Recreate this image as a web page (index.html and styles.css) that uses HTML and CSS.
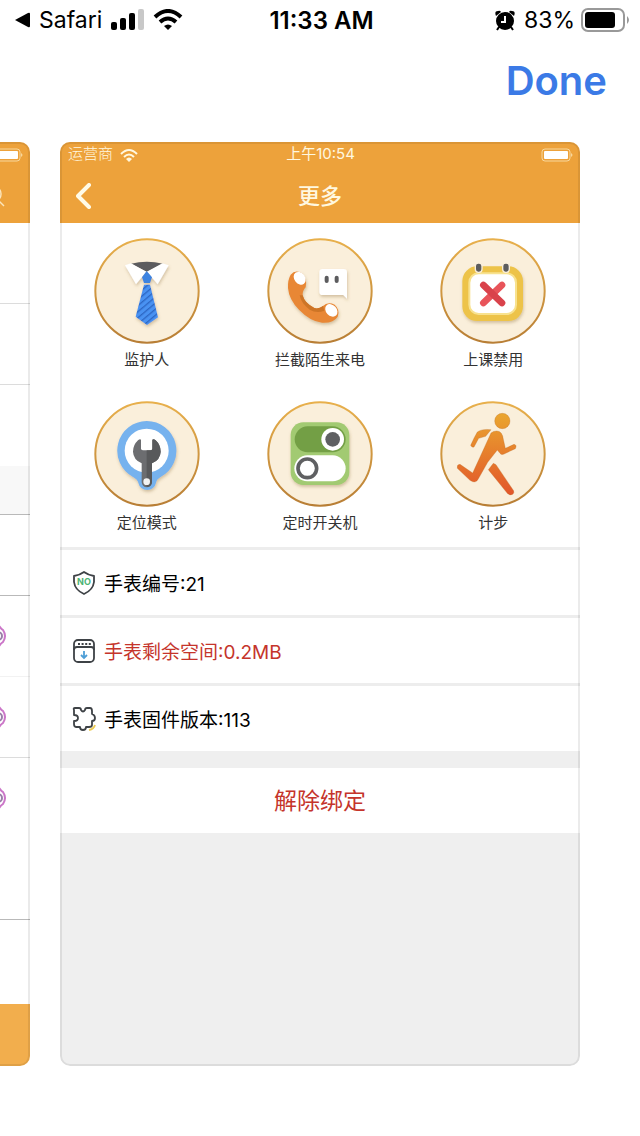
FILE: index.html
```html
<!DOCTYPE html>
<html lang="zh-CN">
<head>
    <meta charset="UTF-8">
    <meta name="viewport" content="width=device-width, initial-scale=1.0">
    <title>更多</title>
    <link rel="stylesheet" href="styles.css">
</head>
<body>

    <header class="status">
        <div class="status-left">
            <svg class="back-app" width="16" height="16" viewBox="0 0 16 16"><path d="M1 8 L14 1 Q16 0 16 2 V14 Q16 16 14 15Z"/></svg>
            <span class="app-name">Safari</span>
            <svg class="signal" width="34" height="22" viewBox="0 0 34 22">
                <rect x="0" y="13" width="6" height="8" rx="2"/>
                <rect x="9" y="9" width="6" height="12" rx="2"/>
                <rect x="18" y="4" width="6" height="17" rx="2"/>
                <rect x="27" y="0" width="6" height="21" rx="2" fill="#c8c8c8"/>
            </svg>
            <svg width="30" height="22" viewBox="0 0 30 22" fill="none" stroke="#000" stroke-width="4">
                <path d="M2 8 Q15 -4 28 8"/>
                <path d="M7 13 Q15 6 23 13"/>
                <path d="M11 17 Q15 14 19 17 L15 21Z" fill="#000" stroke="none"/>
            </svg>
        </div>
        <div class="status-time">11:33 AM</div>
        <div class="status-right">
            <svg width="20" height="21" viewBox="0 0 20 21">
                <circle cx="10" cy="11" r="9"/>
                <path d="M1 6 Q-1 1 3 1 Q5 0 6 2Z M19 6 Q21 1 17 1 Q15 0 14 2Z"/>
                <path d="M4 17 L2 20M16 17 L18 20" fill="none" stroke="#000" stroke-width="2"/>
                <path d="M10 6 V12 H6" fill="none" stroke="#fff" stroke-width="2"/>
            </svg>
            <span class="percent">83%</span>
            <svg width="48" height="24" viewBox="0 0 48 24">
                <rect x="1" y="1" width="42" height="22" rx="6" fill="none" stroke="#999" stroke-width="2"/>
                <rect x="4" y="4" width="30" height="16" rx="3"/>
                <path d="M46 8 Q50 12 46 16Z" fill="#999"/>
            </svg>
        </div>
    </header>

    <div class="toolbar">
        <button type="button" class="done">Done</button>
    </div>

    <main class="gallery">

        <!-- previous screenshot, only its right edge is visible -->
        <section class="shot prev">
            <div class="shot-header">
                <div class="shot-status">
                    <svg class="battery" width="32" height="14" viewBox="0 0 32 14">
                        <rect x="1" y="1" width="28" height="12" rx="3" fill="none" stroke="#f8d79c"/>
                        <rect x="3" y="3" width="24" height="8" rx="1" fill="#fff"/>
                        <path d="M30 5 Q33 7 30 9Z" fill="#f8d79c"/>
                    </svg>
                </div>
                <div class="shot-nav">
                    <svg class="search" width="22" height="22" viewBox="0 0 22 22" fill="none" stroke="#fbe6bd" stroke-width="1.500"><circle cx="10" cy="9" r="8"/><path d="M15 15 L21 21"/></svg>
                </div>
            </div>
            <div class="line"></div>
            <div class="line"></div>
            <div class="line plain"></div>
            <div class="band"></div>
            <div class="line dark"></div>
            <div class="line faint"><svg width="24" height="26" viewBox="0 0 24 26" fill="none"><path d="M12 1 Q14 5 17 7 Q21 13 17 19 Q14 21 12 25" stroke="#cb76c8" stroke-width="2"/><circle cx="12" cy="13" r="4" stroke="#9a7fa8" stroke-width="2"/></svg></div>
            <div class="line"><svg width="24" height="26" viewBox="0 0 24 26" fill="none"><path d="M12 1 Q14 5 17 7 Q21 13 17 19 Q14 21 12 25" stroke="#cb76c8" stroke-width="2"/><circle cx="12" cy="13" r="4" stroke="#9a7fa8" stroke-width="2"/></svg></div>
            <div class="line plain"><svg width="24" height="26" viewBox="0 0 24 26" fill="none"><path d="M12 1 Q14 5 17 7 Q21 13 17 19 Q14 21 12 25" stroke="#cb76c8" stroke-width="2"/><circle cx="12" cy="13" r="4" stroke="#9a7fa8" stroke-width="2"/></svg></div>
            <div class="line dark"></div>
            <div class="prev-footer"></div>
        </section>

        <section class="shot">
            <div class="shot-header">
                <div class="shot-status">
                    <div class="carrier">
                        <span>运营商</span>
                        <svg width="18" height="13" viewBox="0 0 18 13" fill="none" stroke="#fff8e0" stroke-width="2">
                            <path d="M1 5 Q9 -3 17 5"/>
                            <path d="M4 8 Q9 3 14 8"/>
                            <path d="M6 10 Q9 7 12 10 L9 13Z" fill="#fff8e0" stroke="none"/>
                        </svg>
                    </div>
                    <div class="shot-time">上午10:54</div>
                    <svg class="battery" width="32" height="14" viewBox="0 0 32 14">
                        <rect x="1" y="1" width="28" height="12" rx="3" fill="none" stroke="#f8d79c"/>
                        <rect x="3" y="3" width="24" height="8" rx="1" fill="#fff"/>
                        <path d="M30 5 Q33 7 30 9Z" fill="#f8d79c"/>
                    </svg>
                </div>
                <div class="shot-nav">
                    <button type="button" class="back" aria-label="返回">
                        <svg width="16" height="26" viewBox="0 0 16 26" fill="none" stroke="#fffbe8" stroke-width="4" stroke-linecap="round" stroke-linejoin="round"><path d="M13 2 L2 13 L13 24"/></svg>
                    </button>
                    <h1>更多</h1>
                </div>
            </div>

            <div class="features">
                <button type="button" class="feature">
                    <svg class="badge" viewBox="0 0 318 318">
                        <defs>
                            <linearGradient id="ring" x1="0" y1="0" x2="0" y2="1"><stop offset="0" stop-color="#e8b04c"/><stop offset="1" stop-color="#b87e35"/></linearGradient>
                            <linearGradient id="run" gradientUnits="userSpaceOnUse" x1="0" y1="40" x2="0" y2="280"><stop offset="0" stop-color="#eaa52f"/><stop offset="1" stop-color="#e2562a"/></linearGradient>
                            <pattern id="stripes" width="14" height="14" patternUnits="userSpaceOnUse" patternTransform="rotate(-40)"><rect width="14" height="14" fill="#4a92f2"/><rect width="14" height="4" fill="#2c67c4"/></pattern>
                            <filter id="drop" x="-20%" y="-20%" width="140%" height="150%"><feDropShadow dx="2" dy="6" stdDeviation="4" flood-color="#8a6a30" flood-opacity=".35"/></filter>
                        </defs>
                        <circle cx="159" cy="159" r="155" fill="#faefdb" stroke="url(#ring)" stroke-width="6"/>
                        <g filter="url(#drop)">
                            <path d="M111 77 Q158 65 207 77 L158 101Z" fill="#5c5c5e"/>
                            <path d="M93 82 L111 76 L157 101 L126 139Z" fill="#fff"/>
                            <path d="M224 82 L205 76 L159 101 L191 139Z" fill="#fff"/>
                            <path d="M158 99 L144 118 L150 135 H168 L174 118Z" fill="#3e83e0"/>
                            <path d="M150 140 H168 L192 238 L159 261 L125 236Z" fill="url(#stripes)"/>
                        </g>
                    </svg>
                    <span>监护人</span>
                </button>
                <button type="button" class="feature">
                    <svg class="badge" viewBox="0 0 318 318">
                        <circle cx="159" cy="159" r="155" fill="#faefdb" stroke="url(#ring)" stroke-width="6"/>
                        <g filter="url(#drop)">
                            <path d="M71 110 Q62 125 63 150 Q66 185 96 215 Q130 250 165 254 Q200 256 212 236 Q220 215 203 200 Q182 190 168 204 Q155 214 142 210 Q112 195 107 172 Q106 158 116 148 Q122 125 105 106 Q85 94 71 110Z" fill="#e88735"/>
                            <path d="M107 172 Q112 195 142 210 Q155 214 168 204 L172 218 Q150 228 128 215 Q102 196 98 172Z" fill="#cd7428"/>
                            <ellipse cx="98" cy="121" rx="16" ry="21" transform="rotate(-38 98 121)" fill="#fff"/>
                            <ellipse cx="193" cy="217" rx="16" ry="21" transform="rotate(-42 193 217)" fill="#fff"/>
                            <path d="M167 93 H230 Q240 93 240 103 V182 L229 171 H167 Q157 171 157 161 V103 Q157 93 167 93Z" fill="#fff"/>
                        </g>
                        <rect x="173" y="113" width="12" height="22" rx="6" fill="#5c5c5e"/>
                        <rect x="203" y="113" width="12" height="22" rx="6" fill="#5c5c5e"/>
                    </svg>
                    <span>拦截陌生来电</span>
                </button>
                <button type="button" class="feature">
                    <svg class="badge" viewBox="0 0 318 318">
                        <circle cx="159" cy="159" r="155" fill="#faefdb" stroke="url(#ring)" stroke-width="6"/>
                        <rect x="67" y="85" width="182" height="164" rx="44" fill="#edc34a" filter="url(#drop)"/>
                        <rect x="88" y="106" width="140" height="122" rx="28" fill="#fff" stroke="#f8e28f" stroke-width="6"/>
                        <rect x="106" y="75" width="20" height="28" rx="9" fill="#5c5c5e" stroke="#faefdb" stroke-width="4"/>
                        <rect x="188" y="75" width="20" height="28" rx="9" fill="#5c5c5e" stroke="#faefdb" stroke-width="4"/>
                        <path d="M130 195 L186 141" stroke="#e8545a" stroke-width="20" stroke-linecap="round"/>
                        <path d="M130 141 L186 195" stroke="#d9424b" stroke-width="20" stroke-linecap="round"/>
                    </svg>
                    <span>上课禁用</span>
                </button>
                <button type="button" class="feature">
                    <svg class="badge" viewBox="0 0 318 318">
                        <circle cx="159" cy="159" r="155" fill="#faefdb" stroke="url(#ring)" stroke-width="6"/>
                        <path d="M158 60 A89 89 0 0 1 201 227 Q187 235 186 245 A27 27 0 0 1 133 245 Q131 235 116 227 A89 89 0 0 1 158 60Z" fill="#76b2ee" filter="url(#drop)"/>
                        <circle cx="158" cy="149" r="66" fill="#fff"/>
                        <path d="M141 116 V143 Q142 148 148 148 H169 Q174 148 175 143 V116 Q179 113 185 118 Q200 132 200 152 Q199 176 174 187 V243 A15 15 0 0 1 143 243 V187 Q118 176 117 152 Q117 132 132 118 Q138 113 141 116Z" fill="#6c6d70"/>
                        <path d="M158 148 H169 Q174 148 175 143 V116 Q179 113 185 118 Q200 132 200 152 Q199 176 174 187 V243 A15 15 0 0 1 158 258Z" fill="#58595b"/>
                        <circle cx="158" cy="242" r="10" fill="#f2f2f2"/>
                    </svg>
                    <span>定位模式</span>
                </button>
                <button type="button" class="feature">
                    <svg class="badge" viewBox="0 0 318 318">
                        <circle cx="159" cy="159" r="155" fill="#faefdb" stroke="url(#ring)" stroke-width="6"/>
                        <rect x="71" y="64" width="176" height="188" rx="38" fill="#a2ca72" filter="url(#drop)"/>
                        <rect x="83" y="76" width="153" height="78" rx="39" fill="#739f45"/>
                        <circle cx="197" cy="115" r="34" fill="#fff"/>
                        <circle cx="197" cy="115" r="22" fill="#5f6062"/>
                        <rect x="82" y="163" width="154" height="78" rx="39" fill="#fff"/>
                        <circle cx="121" cy="202" r="28" fill="#fff" stroke="#5f6062" stroke-width="11"/>
                    </svg>
                    <span>定时开关机</span>
                </button>
                <button type="button" class="feature">
                    <svg class="badge" viewBox="0 0 318 318">
                        <circle cx="159" cy="159" r="155" fill="#faefdb" stroke="url(#ring)" stroke-width="6"/>
                        <g fill="url(#run)" stroke="#b86a25" stroke-opacity=".45" stroke-width="2">
                            <circle cx="187" cy="60" r="23"/>
                            <path d="M153 86 Q125 83 112 93 Q103 108 92 133 Q96 141 102 138 L116 112 L137 106Z"/>
                            <path d="M153 96 Q140 125 98 216 L60 190 Q50 190 52 202 L90 238 Q108 250 116 232 L143 184 L172 147 L180 157 Q184 163 192 159 L226 143 Q232 132 222 130 L196 142 L190 115 Q187 90 170 90 Q160 90 153 96Z"/>
                            <path d="M160 187 L145 206 L202 277 Q210 285 218 280 Q224 275 220 268 L168 191Z"/>
                        </g>
                    </svg>
                    <span>计步</span>
                </button>
            </div>

            <ul class="info">
                <li>
                    <svg width="24" height="24" viewBox="0 0 24 24">
                        <path d="M12 1 Q16 4 22 5 V11 Q21 19 12 23 Q3 19 2 11 V5 Q8 4 12 1Z" fill="none" stroke="#3e4246" stroke-width="1.800" stroke-linejoin="round"/>
                        <text x="12" y="14" text-anchor="middle" class="shield-text">NO</text>
                    </svg>
                    <span>手表编号:21</span>
                </li>
                <li class="warn">
                    <svg width="24" height="24" viewBox="0 0 24 24" fill="none" stroke="#3e4246" stroke-width="1.800">
                        <rect x="2" y="1" width="20" height="22" rx="4"/>
                        <path d="M2 11 Q2 8 5 8 H19 Q22 8 22 11"/>
                        <path d="M6 5 H19" stroke-dasharray="2 1.600"/>
                        <path d="M12 12 V19 M9 16 L12 19 L15 16" stroke="#4e9ed6"/>
                    </svg>
                    <span>手表剩余空间:0.2MB</span>
                </li>
                <li>
                    <svg width="24" height="24" viewBox="0 0 24 24" fill="none" stroke="#3e4246" stroke-width="1.800" stroke-linejoin="round">
                        <path d="M3 1 H7 Q9 1 9 3 Q11 6 13 3 Q13 1 15 1 H18 Q20 1 20 4 V7 Q23 8 23 11 Q23 14 20 14 V18 Q20 20 17 20 H14 Q14 23 11 23 Q8 23 8 20 H4 Q2 20 2 17 V14 Q6 14 6 11 Q6 8 2 8 V3 Q1 1 3 1Z"/>
                        <path d="M17 23 Q22 22 23 18" stroke="#eccb52"/>
                    </svg>
                    <span>手表固件版本:113</span>
                </li>
            </ul>

            <button type="button" class="unbind">解除绑定</button>
        </section>

    </main>

</body>
</html>
```

FILE: styles.css
```css
* {
    box-sizing: border-box;
}
body {
    margin: 0;
    min-height: 100vh;
    display: flex;
    flex-direction: column;
    background-color: #fff;
    color: #000;
    font-family: Inter, "Noto Sans CJK SC", sans-serif;
}
button {
    padding: 0;
    border: none;
    background: none;
    color: inherit;
    font: inherit;
    cursor: pointer;
}
svg {
    display: block;
    flex: none;
}

/* phone status bar */
.status {
    display: grid;
    grid-template-columns: 1fr auto 1fr;
    align-items: center;
    height: 40px;
    padding: 0 11px 0 14px;
    font-size: 23px;
}
.status-left,
.status-right {
    display: flex;
    align-items: center;
}
.status-right {
    justify-content: flex-end;
}
.app-name {
    margin: 0 9px;
}
.signal {
    margin-right: 8px;
}
.status-time {
    font-size: 24px;
    font-weight: 600;
}
.percent {
    margin: 0 6px 0 9px;
}

.toolbar {
    display: flex;
    justify-content: flex-end;
    height: 102px;
    padding: 16px 33px 0 0;
}
.done {
    height: 50px;
    color: #3b7ae6;
    font-size: 40px;
    font-weight: 600;
    line-height: 50px;
}

/* screenshots */
.gallery {
    flex: 1;
    display: grid;
    grid-template-columns: 30px 1fr;
    gap: 30px;
    padding: 0 60px 70px 0;
}
.shot {
    position: relative;
    display: flex;
    flex-direction: column;
    overflow: hidden;
    border-radius: 10px;
    background-color: #efefef;
}
.shot::after {
    content: "";
    position: absolute;
    inset: 0;
    border: 2px solid rgba(0, 0, 0, 0.08);
    border-radius: inherit;
    pointer-events: none;
}
.shot-header {
    background-color: #eda23b;
    color: #fff8e0;
}
.shot-status {
    display: grid;
    grid-template-columns: 1fr auto 1fr;
    align-items: center;
    height: 26px;
    padding: 0 7px 0 8px;
    font-size: 15px;
    line-height: 24px;
}
.carrier {
    display: flex;
    align-items: center;
    gap: 7px;
    font-weight: 300;
}
.carrier span,
.shot-time {
    padding-bottom: 2px;
}
.battery {
    justify-self: end;
}
.shot-nav {
    display: grid;
    grid-template-columns: 1fr auto 1fr;
    align-items: center;
    height: 55px;
    padding: 0 16px;
}
.back {
    justify-self: start;
}
.shot-nav h1 {
    margin: 0;
    padding-bottom: 4px;
    font-size: 22px;
    font-weight: 500;
}

.features {
    display: grid;
    grid-template-columns: repeat(3, 1fr);
    row-gap: 25px;
    padding: 15px 0 8px;
    background-color: #fff;
}
.feature {
    display: flex;
    flex-direction: column;
    align-items: center;
    color: #333;
    font-size: 15px;
    line-height: 32px;
}
.badge {
    width: 106px;
    height: 106px;
}

.info {
    margin: 0;
    padding: 0;
    list-style: none;
}
.info li {
    display: flex;
    align-items: center;
    gap: 8px;
    height: 68px;
    padding-left: 12px;
    border-top: 3px solid #ededed;
    background-color: #fff;
    font-size: 19px;
}
.info .warn {
    color: #c5342b;
}
.shield-text {
    fill: #4cb373;
    font-size: 9px;
    font-weight: 700;
}
.unbind {
    height: 65px;
    margin-top: 17px;
    padding-bottom: 4px;
    background-color: #fff;
    color: #c5342b;
    font-size: 23px;
}

/* visible edge of the previous screenshot */
.prev {
    border-radius: 0 10px 10px 0;
    background-color: #fff;
}
.prev::after {
    border-left: none;
}
.prev .shot-status,
.prev .shot-nav {
    display: flex;
    justify-content: flex-end;
    padding-left: 0;
}
.prev .shot-nav {
    padding-right: 25px;
}
.line {
    display: flex;
    align-items: center;
    justify-content: flex-end;
    height: 81px;
    padding-right: 20px;
    border-bottom: 1px solid #dcdcdc;
}
.line.plain {
    border-color: transparent;
}
.line.faint {
    border-color: #f2f2f2;
}
.line.dark {
    border-color: #b9b9b9;
}
.band {
    height: 49px;
    border-bottom: 1px solid #b9b9b9;
    background-color: #f8f8f8;
}
.prev-footer {
    height: 62px;
    margin-top: auto;
    background-color: #f2ae4d;
}
```
